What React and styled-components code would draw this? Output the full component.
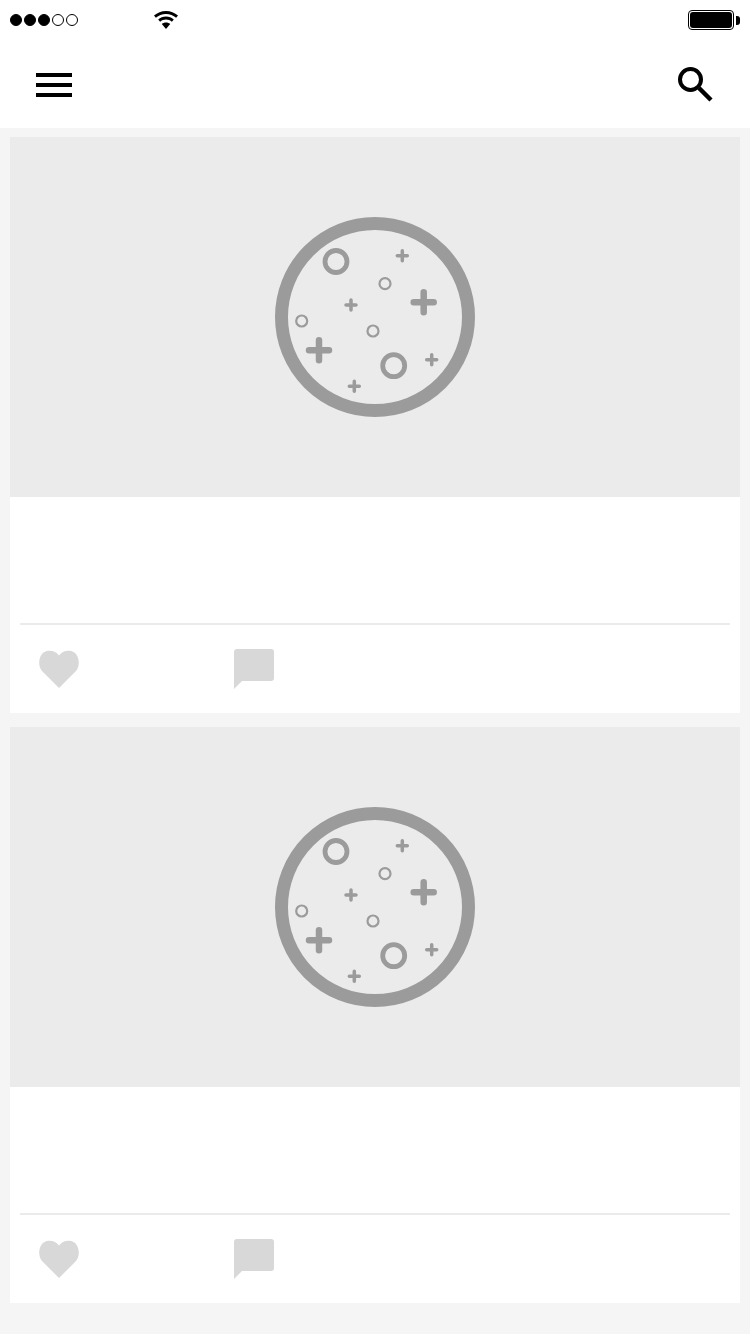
import styled, { createGlobalStyle } from 'styled-components'

const GlobalStyle = createGlobalStyle`
    html, body {
        margin: 0;
        padding: 0;
        background: #f5f5f5;
        font-family: "Liberation Sans", Arial, sans-serif;
    }
`

const Page = styled.div`
    width: 750px;
    height: 1334px;
    display: flex;
    flex-direction: column;
    background: #f5f5f5;
    overflow: hidden;
`

const StatusBar = styled.div`
    height: 40px;
    padding: 0 10px;
    box-sizing: border-box;
    display: flex;
    align-items: center;
    justify-content: space-between;
    background: #fff;
`

const StatusLeft = styled.div`
    display: flex;
    align-items: center;
    gap: 76px;
`

const Dots = styled.div`
    display: flex;
    gap: 2px;
`

const Dot = styled.span`
    width: 12px;
    height: 12px;
    box-sizing: border-box;
    border-radius: 50%;
    border: 1px solid #000;
    background: ${(p) => (p.$on ? '#000' : '#fff')};
`

const Battery = styled.div`
    display: flex;
    align-items: center;
    gap: 2px;
`

const BatteryBody = styled.div`
    width: 46px;
    height: 20px;
    box-sizing: border-box;
    border: 1px solid #000;
    border-radius: 4px;
    padding: 1px;
    background: #fff;

    &::after {
        content: '';
        display: block;
        height: 100%;
        border-radius: 3px;
        background: #000;
    }
`

const BatteryTip = styled.div`
    width: 4px;
    height: 9px;
    border-radius: 0 3px 3px 0;
    background: #000;
`

const NavBar = styled.div`
    height: 88px;
    padding: 2px 36px 0;
    box-sizing: border-box;
    display: flex;
    align-items: center;
    justify-content: space-between;
    background: #fff;
`

const Menu = styled.div`
    width: 36px;
    display: flex;
    flex-direction: column;
    gap: 6px;
`

const MenuBar = styled.span`
    height: 4px;
    background: #000;
`

const Feed = styled.div`
    padding: 9px 10px;
    display: flex;
    flex-direction: column;
    gap: 14px;
`

const Card = styled.div`
    height: 576px;
    display: flex;
    flex-direction: column;
    background: #fff;
`

const Picture = styled.div`
    height: 360px;
    display: flex;
    align-items: center;
    justify-content: center;
    background: #ebebeb;
`

const Body = styled.div`
    height: 126px;
`

const Actions = styled.div`
    flex: 1;
    margin: 0 10px;
    padding: 24px 0 0 18px;
    box-sizing: border-box;
    display: flex;
    align-items: flex-start;
    gap: 154px;
    border-top: 2px solid #ebebeb;
`

const SearchIcon = () => (
    <svg width="36" height="36" viewBox="0 0 36 36" fill="none" stroke="#000">
        <circle cx="12.500" cy="12.500" r="10.500" strokeWidth="4" />
        <path d="M21 21 L33 33" strokeWidth="4.500" />
    </svg>
)

const WifiIcon = () => (
    <svg width="24" height="18" viewBox="0 0 24 18">
        <path
            d="M12 0C7.400 0 3.300 1.700 0 4.600l1.900 2.200C4.600 4.400 8.100 3 12 3s7.400 1.400 10.100 3.800L24 4.600C20.700 1.700 16.600 0 12 0z"
            fill="#000"
        />
        <path
            d="M12 5.500c-3 0-5.700 1.100-7.800 3l1.900 2.200C7.700 9.300 9.700 8.500 12 8.500s4.300.8 5.900 2.200l1.900-2.200c-2.100-1.900-4.800-3-7.800-3z"
            fill="#000"
        />
        <path d="M7.800 13 L12 18 L16.200 13 C15 12 13.600 11.500 12 11.500 S9 12 7.800 13z" fill="#000" />
    </svg>
)

const PlanetIcon = () => {
    const bigRings = [[61, 44.5], [118.7, 148.7]]
    const smallRings = [[110, 66.7], [26.7, 104], [98, 114]]
    const bigPlus = [[148.7, 85.3], [44, 133.3]]
    const smallPlus = [[127.3, 38.7], [76, 88], [156.7, 142.7], [79.3, 169.3]]
    return (
        <svg width="200" height="200" viewBox="0 0 200 200" fill="none" stroke="#9b9b9b" strokeLinecap="round">
            <circle cx="100" cy="100" r="93.500" strokeWidth="13" />
            {bigRings.map(([x, y]) => (
                <circle key={x} cx={x} cy={y} r="11" strokeWidth="4.800" />
            ))}
            {smallRings.map(([x, y]) => (
                <circle key={x} cx={x} cy={y} r="5.500" strokeWidth="2.200" />
            ))}
            {bigPlus.map(([x, y]) => (
                <path key={x} d={`M${x - 10} ${y}H${x + 10}M${x} ${y - 10}V${y + 10}`} strokeWidth="6.500" />
            ))}
            {smallPlus.map(([x, y]) => (
                <path key={x} d={`M${x - 5} ${y}H${x + 5}M${x} ${y - 5}V${y + 5}`} strokeWidth="3.500" />
            ))}
        </svg>
    )
}

const HeartIcon = () => (
    <svg width="42" height="40" viewBox="0 0 42 40">
        <path
            d="M21 39 L4 22 C-0.800 17 0 2.200 11 1.800 C15.500 1.700 18.800 3.800 21 6.500 C23.200 3.800 26.500 1.700 31 1.800 C42 2.200 42.800 17 38 22 Z"
            fill="#d8d8d8"
        />
    </svg>
)

const CommentIcon = () => (
    <svg width="40" height="40" viewBox="0 0 40 40">
        <path
            d="M3 0 H37 A3 3 0 0 1 40 3 V29 A3 3 0 0 1 37 32 H8 L0 40 V3 A3 3 0 0 1 3 0 Z"
            fill="#d8d8d8"
        />
    </svg>
)

const Post = () => (
    <Card>
        <Picture>
            <PlanetIcon />
        </Picture>
        <Body />
        <Actions>
            <HeartIcon />
            <CommentIcon />
        </Actions>
    </Card>
)

const App = () => {
    return (
        <Page>
            <GlobalStyle />
            <StatusBar>
                <StatusLeft>
                    <Dots>
                        <Dot $on />
                        <Dot $on />
                        <Dot $on />
                        <Dot />
                        <Dot />
                    </Dots>
                    <WifiIcon />
                </StatusLeft>
                <Battery>
                    <BatteryBody />
                    <BatteryTip />
                </Battery>
            </StatusBar>
            <NavBar>
                <Menu>
                    <MenuBar />
                    <MenuBar />
                    <MenuBar />
                </Menu>
                <SearchIcon />
            </NavBar>
            <Feed>
                <Post />
                <Post />
            </Feed>
        </Page>
    )
}

export default App
